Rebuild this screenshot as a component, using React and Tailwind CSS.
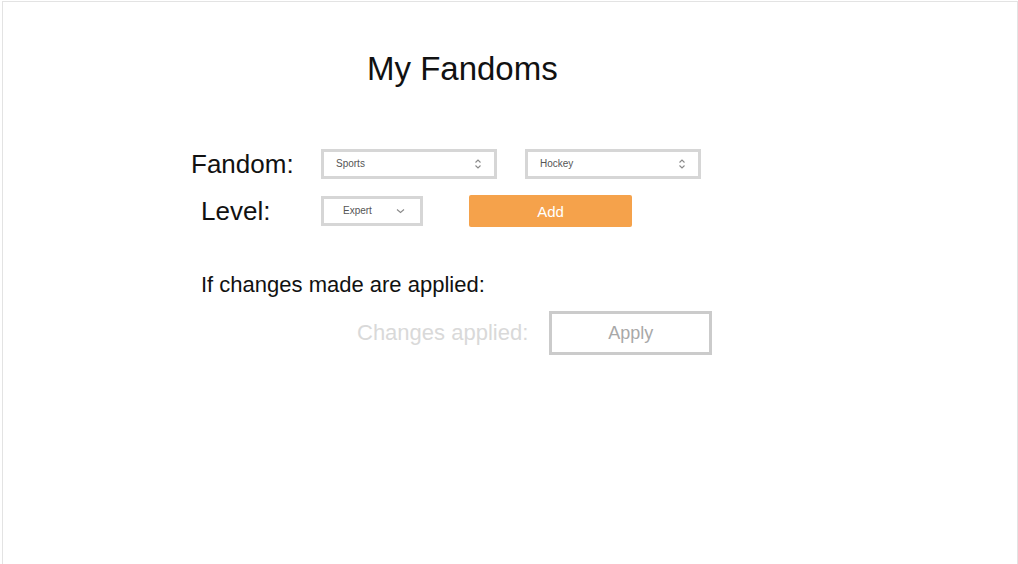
import React from 'react';

// Small up/down chevrons used on the select boxes
function UpDown() {
  return (
    <svg width="8" height="12" viewBox="0 0 8 12" fill="none" stroke="#8a8a8a" strokeWidth="1.1">
      <path d="M1.5 4.5 L4 2 L6.5 4.5" />
      <path d="M1.5 7.5 L4 10 L6.5 7.5" />
    </svg>
  );
}

function Down() {
  return (
    <svg width="9" height="6" viewBox="0 0 9 6" fill="none" stroke="#8a8a8a" strokeWidth="1.1">
      <path d="M1 1.5 L4.5 4.5 L8 1.5" />
    </svg>
  );
}

// Fake select box, drawn with divs so it looks the same everywhere
function SelectBox({ label, width, pl, arrow }) {
  return (
    <div
      className={`flex h-[30px] items-center justify-between border-[3px] border-[#d6d6d6] bg-white ${width}`}
    >
      <span className={`text-[10px] leading-none text-[#555] ${pl}`}>{label}</span>
      {arrow}
    </div>
  );
}

export default function App() {
  return (
    <div className="h-[564px] w-full overflow-hidden bg-white pt-px pl-[2px] font-['Liberation_Sans',Arial,sans-serif]">
      <div className="h-[600px] w-[1016px] border-x border-t border-[#e3e3e3]">
        {/* Title */}
        <h1 className="mt-[51px] pl-[364px] text-[33px] leading-[32px] text-[#111]">My Fandoms</h1>

        {/* Fandom row */}
        <div className="mt-[64px] flex h-[30px] items-center pl-[188px]">
          <span className="w-[130px] text-[26px] leading-none text-[#111]">Fandom:</span>
          <SelectBox
            label="Sports"
            width="w-[176px]"
            pl="pl-[12px]"
            arrow={<span className="pr-[12px]"><UpDown /></span>}
          />
          <div className="ml-[28px]">
            <SelectBox
              label="Hockey"
              width="w-[176px]"
              pl="pl-[12px]"
              arrow={<span className="pr-[12px]"><UpDown /></span>}
            />
          </div>
        </div>

        {/* Level row */}
        <div className="mt-[16px] flex h-[32px] items-center pl-[198px]">
          <span className="w-[120px] text-[26px] leading-none text-[#111]">Level:</span>
          <SelectBox
            label="Expert"
            width="w-[102px]"
            pl="pl-[19px]"
            arrow={<span className="pr-[15px]"><Down /></span>}
          />
          <button className="ml-[46px] h-[32px] w-[163px] rounded-[2px] bg-[#f5a24b] text-[15px] leading-none text-white">
            Add
          </button>
        </div>

        {/* Status */}
        <p className="mt-[47px] pl-[198px] text-[22px] leading-none text-[#111]">If changes made are applied:</p>

        <div className="mt-[15px] flex items-center pl-[354px]">
          <span className="text-[22px] leading-none text-[#d9d9d9]">Changes applied:</span>
          <button className="ml-[21px] h-[44px] w-[163px] border-[3px] border-[#cbcbcb] bg-white text-[18px] leading-none text-[#a8a8a8]">
            Apply
          </button>
        </div>
      </div>
    </div>
  );
}
